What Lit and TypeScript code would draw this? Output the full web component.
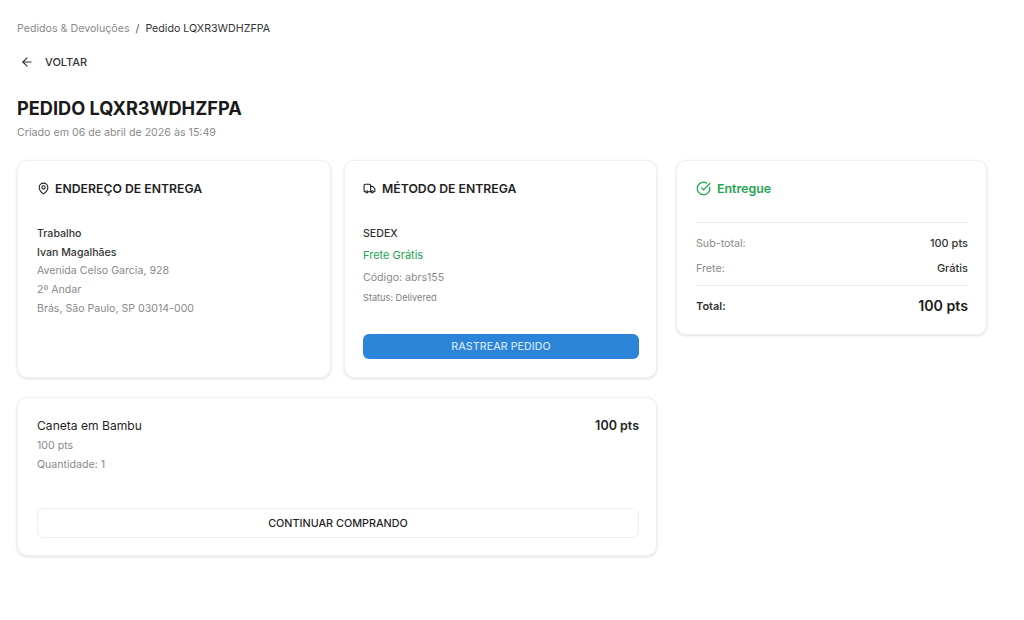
import { LitElement, html, css } from "lit";
import { customElement } from "lit/decorators.js";

@customElement("app-root")
export class AppRoot extends LitElement {
  static styles = css`
    :host { display: block; width: 1024px; height: 620px; background: #fff; overflow: hidden; font-family: Inter, "Liberation Sans", sans-serif; color: #1a1a1a; }
    .page { display: flex; flex-direction: column; padding: 21px 37px 0 17px; box-sizing: border-box; }
    .crumbs { display: flex; align-items: center; gap: 6px; font-size: 10.66px; line-height: 15px; color: #8a8a8a; }
    .crumbs .cur { color: #333; }
    .crumbs .sep { color: #555; }
    .back { display: flex; align-items: center; gap: 11px; margin-top: 18px; margin-left: 3px; height: 16px; font-size: 11px; line-height: 16px; color: #333; font-weight: 500; }
    .back svg { display: block; }
    h1 { margin: 26px 0 0; font-size: 18.2px; line-height: 24px; font-weight: 700; color: #1a1a1a; }
    .created { margin-top: 6px; font-size: 10.66px; line-height: 14px; color: #8a8a8a; }
    .layout { display: grid; grid-template-columns: 640px 311px; column-gap: 19px; margin-top: 20px; align-items: start; }
    .left { display: flex; flex-direction: column; gap: 19px; }
    .row { display: grid; grid-template-columns: 314px 313px; column-gap: 13px; }
    .card { box-sizing: border-box; background: #fff; border: 1px solid #f0f0f0; border-radius: 10px; box-shadow: 0 1px 3px rgba(0,0,0,.13); padding: 18px; }
    .addr, .method { height: 218px; display: flex; flex-direction: column; }
    .addr { padding-left: 19px; }
    .method { padding-right: 17px; }
    .head { display: flex; align-items: center; gap: 6px; font-size: 12.25px; line-height: 19px; font-weight: 600; color: #1f1f1f; }
    .addr .head { gap: 5px; }
    .head svg { display: block; }
    .lines { margin-top: 27px; display: flex; flex-direction: column; font-size: 10.6px; line-height: 18.7px; color: #8a8a8a; }
    .strong { color: #333; font-weight: 500; }
    .method .lines { margin-top: 25px; line-height: 22px; }
    .free { color: #22a650; font-size: 11px; line-height: 21px; }
    .code { margin-top: 1px; }
    .status { font-size: 9.2px; color: #808080; line-height: 20px; margin-top: -1px; }
    .track { margin-top: auto; height: 25px; display: flex; align-items: center; justify-content: center; background: #2b84d8; border-radius: 6px; color: #cfe4f8; font-size: 10.6px; font-weight: 500; letter-spacing: .1px; }
    .product { height: 159px; display: flex; flex-direction: column; padding: 18px 17px 17px 19px; }
    .prod-top { display: flex; justify-content: space-between; font-size: 12.1px; line-height: 19px; color: #1f1f1f; }
    .prod-top b { font-weight: 600; font-size: 12.5px; }
    .prod-lines { margin-top: 1px; font-size: 10.6px; line-height: 19px; color: #8a8a8a; display: flex; flex-direction: column; }
    .continue { margin-top: auto; height: 30px; display: flex; align-items: center; justify-content: center; border: 1px solid #efefef; border-radius: 6px; box-sizing: border-box; font-size: 10.8px; font-weight: 500; color: #1f1f1f; }
    .summary { height: 175px; padding-left: 19px; }
    .state { display: flex; align-items: center; gap: 6px; font-size: 12.4px; line-height: 19px; color: #22a650; font-weight: 600; }
    .state svg { display: block; }
    hr { border: 0; border-top: 1px solid #eeeeee; margin: 0; }
    .summary hr.first { margin-top: 24px; }
    .sum-row { display: flex; justify-content: space-between; align-items: flex-start; font-size: 10.7px; line-height: 16px; color: #8a8a8a; }
    .sum-row span:last-child { color: #333; font-weight: 500; font-size: 11px; line-height: 15px; }
    .s1 { margin-top: 13px; }
    .s2 { margin-top: 9px; }
    .summary hr.second { margin-top: 8px; }
    .total { align-items: center; margin-top: 10px; line-height: 20px; color: #333; font-weight: 600; font-size: 11px; }
    .total span:first-child { font-weight: 600; color: #333; }
    .sum-row.total span:last-child { font-size: 14.2px; line-height: 20px; font-weight: 600; color: #1a1a1a; }
  `;

  render() {
    return html`<div class="page">
      <div class="crumbs"><span>Pedidos &amp; Devoluções</span><span class="sep">/</span><span class="cur">Pedido LQXR3WDHZFPA</span></div>
      <div class="back">
        <svg width="14" height="14" viewBox="0 0 24 24" fill="none" stroke="#333" stroke-width="2" stroke-linecap="round" stroke-linejoin="round"><path d="M19 12H5"/><path d="M12 19l-7-7 7-7"/></svg>
        <span>VOLTAR</span>
      </div>
      <h1>PEDIDO LQXR3WDHZFPA</h1>
      <div class="created">Criado em 06 de abril de 2026 às 15:49</div>
      <div class="layout">
        <div class="left">
          <div class="row">
            <section class="card addr">
              <div class="head">
                <svg width="13" height="13" viewBox="0 0 24 24" fill="none" stroke="#222" stroke-width="2" stroke-linecap="round" stroke-linejoin="round"><path d="M20 10c0 6-8 12-8 12s-8-6-8-12a8 8 0 0 1 16 0Z"/><circle cx="12" cy="10" r="3"/></svg>
                <span>ENDEREÇO DE ENTREGA</span>
              </div>
              <div class="lines">
                <span class="strong">Trabalho</span>
                <span class="strong">Ivan Magalhães</span>
                <span>Avenida Celso Garcia, 928</span>
                <span>2º Andar</span>
                <span>Brás, São Paulo, SP 03014-000</span>
              </div>
            </section>
            <section class="card method">
              <div class="head">
                <svg width="13" height="13" viewBox="0 0 24 24" fill="none" stroke="#222" stroke-width="2" stroke-linecap="round" stroke-linejoin="round"><path d="M14 18V6a2 2 0 0 0-2-2H4a2 2 0 0 0-2 2v11a1 1 0 0 0 1 1h2"/><path d="M15 18H9"/><path d="M19 18h2a1 1 0 0 0 1-1v-3.65a1 1 0 0 0-.22-.62l-3.48-4.35A1 1 0 0 0 17.52 8H14"/><circle cx="17" cy="18" r="2"/><circle cx="7" cy="18" r="2"/></svg>
                <span>MÉTODO DE ENTREGA</span>
              </div>
              <div class="lines">
                <span class="strong">SEDEX</span>
                <span class="free">Frete Grátis</span>
                <span class="code">Código: abrs155</span>
                <span class="status">Status: Delivered</span>
              </div>
              <div class="track">RASTREAR PEDIDO</div>
            </section>
          </div>
          <section class="card product">
            <div class="prod-top"><span>Caneta em Bambu</span><b>100 pts</b></div>
            <div class="prod-lines"><span>100 pts</span><span>Quantidade: 1</span></div>
            <div class="continue">CONTINUAR COMPRANDO</div>
          </section>
        </div>
        <aside class="card summary">
          <div class="state">
            <svg width="15" height="15" viewBox="0 0 24 24" fill="none" stroke="#22a650" stroke-width="2" stroke-linecap="round" stroke-linejoin="round"><path d="M21.8 10A10 10 0 1 1 17 3.34"/><path d="m9 11 3 3L22 4"/></svg>
            <span>Entregue</span>
          </div>
          <hr class="first" />
          <div class="sum-row s1"><span>Sub-total:</span><span>100 pts</span></div>
          <div class="sum-row s2"><span>Frete:</span><span>Grátis</span></div>
          <hr class="second" />
          <div class="sum-row total"><span>Total:</span><span>100 pts</span></div>
        </aside>
      </div>
    </div>`;
  }
}
